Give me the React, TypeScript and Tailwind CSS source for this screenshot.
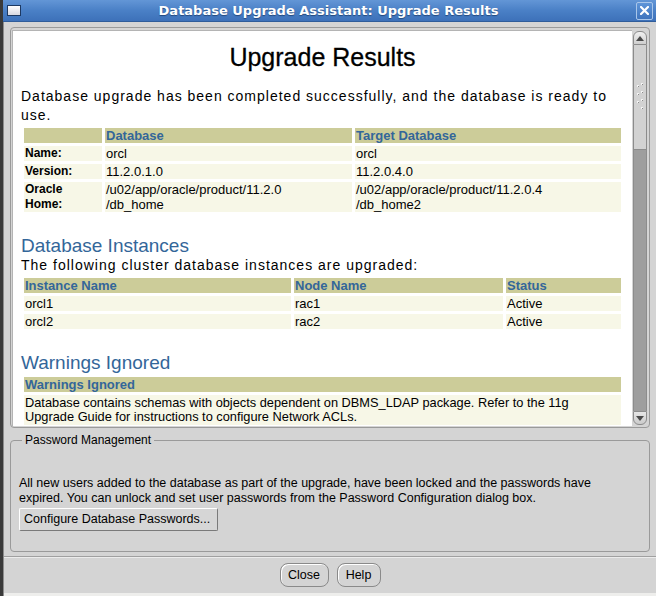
import React from "react";

const BLUE = "text-[#336699]";

function TitleBar() {
  return (
    <div className="h-[22px] flex items-center bg-gradient-to-b from-[#6396d6] via-[#4a80c6] to-[#3d71b9] border-b border-[#2f5c9a] pl-[4px] pr-[3px]">
      <div className="w-[14px] h-[11px] border border-[#1d3962] bg-gradient-to-b from-white to-[#d8d8e0]" />
      <div className="flex-1 text-center text-white font-bold text-[13px] font-['DejaVu_Sans',sans-serif] [text-shadow:0_1px_1px_#23487c]">
        Database Upgrade Assistant: Upgrade Results
      </div>
      <div className="w-[17px] h-[18px] rounded-[2px] border border-[#a9c6ea] bg-gradient-to-b from-[#5f95d8] to-[#3f74bd] flex items-center justify-center">
        <svg width="9" height="9" viewBox="0 0 9 9">
          <path d="M1 1 L8 8 M8 1 L1 8" stroke="white" strokeWidth="2.2" strokeLinecap="square" />
        </svg>
      </div>
    </div>
  );
}

function ScrollBar() {
  return (
    <div className="w-[14px] ml-[1px] mt-[1px] mb-[1px] flex flex-col">
      <div className="h-[14px] rounded-t-[6px] border border-[#8c8c8c] bg-gradient-to-b from-[#f0f0f0] to-[#cfcfcf] flex items-center justify-center">
        <svg width="8" height="5" viewBox="0 0 8 5">
          <path d="M0 5 L4 0 L8 5 Z" fill="#4a4a4a" />
        </svg>
      </div>
      <div className="h-[105px] border-x border-b border-[#8c8c8c] bg-[#d2d2d2] flex items-center justify-center">
        <svg width="8" height="28" viewBox="0 0 8 28">
          {[2, 10, 18].map((y) => (
            <rect key={"l" + y} x="1" y={y} width="2" height="2" fill="#f4f4f4" />
          ))}
          {[0, 8, 16, 24].map((y) => (
            <rect key={"r" + y} x="5" y={y} width="2" height="2" fill="#f4f4f4" />
          ))}
          {[3, 11, 19].map((y) => (
            <rect key={"ls" + y} x="2" y={y} width="1" height="1" fill="#8a8a8a" />
          ))}
          {[1, 9, 17, 25].map((y) => (
            <rect key={"rs" + y} x="6" y={y} width="1" height="1" fill="#8a8a8a" />
          ))}
        </svg>
      </div>
      <div className="flex-1 bg-[#9e9e9e] border-x border-[#8c8c8c]" />
      <div className="h-[14px] rounded-b-[6px] border border-[#8c8c8c] bg-gradient-to-b from-[#e6e6e6] to-[#cbcbcb] flex items-center justify-center">
        <svg width="8" height="5" viewBox="0 0 8 5">
          <path d="M0 0 L4 5 L8 0 Z" fill="#4a4a4a" />
        </svg>
      </div>
    </div>
  );
}

const th = "bg-[#cccc99] text-left font-bold text-[13px] leading-[15px] pl-[1px] text-[#336699]";
const td = "bg-[#f7f7e7] text-[13px] leading-[15px] pl-[1px] align-top";
const label = "bg-[#f7f7e7] text-[12px] leading-[15px] pl-[1px] font-bold align-top";

function Results() {
  return (
    <div className="px-[8px] font-['Liberation_Sans',Arial,sans-serif] text-black">
      <h1 className="mt-[11px] text-center text-[25px] leading-[30px] [-webkit-text-stroke:0.3px_black]">Upgrade Results</h1>
      <p className="mt-[15px] text-[14px] leading-[19px] tracking-[1px]">
        Database upgrade has been completed successfully, and the database is ready to
        <br />
        use.
      </p>

      <table className="w-full table-fixed border-separate border-spacing-[3px]">
        <thead>
          <tr>
            <th className={th + " w-[78px]"}></th>
            <th className={th + " w-[247px]"}>Database</th>
            <th className={th}>Target Database</th>
          </tr>
        </thead>
        <tbody>
          <tr>
            <td className={label}>Name:</td>
            <td className={td}>orcl</td>
            <td className={td}>orcl</td>
          </tr>
          <tr>
            <td className={label}>Version:</td>
            <td className={td}>11.2.0.1.0</td>
            <td className={td}>11.2.0.4.0</td>
          </tr>
          <tr>
            <td className={label}>
              Oracle
              <br />
              Home:
            </td>
            <td className={td}>
              /u02/app/oracle/product/11.2.0
              <br />
              /db_home
            </td>
            <td className={td}>
              /u02/app/oracle/product/11.2.0.4
              <br />
              /db_home2
            </td>
          </tr>
        </tbody>
      </table>

      <h2 className={"mt-[21px] text-[19px] leading-[20px] " + BLUE}>Database Instances</h2>
      <p className="text-[14px] leading-[18px] tracking-[1px]">
        The following cluster database instances are upgraded:
      </p>
      <table className="mt-[1px] w-full table-fixed border-separate border-spacing-[3px]">
        <thead>
          <tr>
            <th className={th + " w-[267px]"}>Instance Name</th>
            <th className={th + " w-[209px]"}>Node Name</th>
            <th className={th}>Status</th>
          </tr>
        </thead>
        <tbody>
          {[
            ["orcl1", "rac1"],
            ["orcl2", "rac2"],
          ].map(([inst, node]) => (
            <tr key={inst}>
              <td className={td}>{inst}</td>
              <td className={td}>{node}</td>
              <td className={td}>Active</td>
            </tr>
          ))}
        </tbody>
      </table>

      <h2 className={"mt-[21px] text-[19px] leading-[20px] " + BLUE}>Warnings Ignored</h2>
      <table className="mt-[1px] w-full border-separate border-spacing-[3px]">
        <thead>
          <tr>
            <th className={th}>Warnings Ignored</th>
          </tr>
        </thead>
        <tbody>
          <tr>
            <td className="bg-[#f7f7e7] text-[12.8px] leading-[14px] pl-[1px] pt-[1px] pb-[1px]">
              Database contains schemas with objects dependent on DBMS_LDAP package. Refer to the 11g
              <br />
              Upgrade Guide for instructions to configure Network ACLs.
            </td>
          </tr>
        </tbody>
      </table>
    </div>
  );
}

function DlgButton({ children, w }: { children: React.ReactNode; w: string }) {
  return (
    <button
      className={
        "h-[24px] rounded-[8px] border border-[#8a8a8a] bg-[#d4d4d4] shadow-[inset_1px_1px_0_#ffffff] text-[12.5px] text-black " +
        w
      }
    >
      {children}
    </button>
  );
}

export default function App() {
  return (
    <div className="w-[656px] h-[596px] overflow-hidden flex flex-col bg-[#d4d4d4] border-l-[3px] border-[#3a3a3a] font-['Liberation_Sans',Arial,sans-serif]">
      <TitleBar />
      <div className="flex-1 flex flex-col border-l border-[#8d8d8d]">
        <div className="mt-[5px] mx-[6px] h-[401px] rounded-[4px] border border-[#9a9a9a] pl-[1px] pr-[2px] pt-[2px] pb-[1px] flex">
          <div className="flex-1 bg-white border-l border-t border-[#b4b4b4] overflow-hidden">
            <Results />
          </div>
          <ScrollBar />
        </div>

        <fieldset className="mt-[5px] mx-[6px] h-[119px] rounded-[4px] border border-[#9a9a9a] px-[8px]">
          <legend className="ml-[3px] px-[3px] text-[12px] leading-[14px] text-black">Password Management</legend>
          <p className="pt-[29px] text-[12.5px] leading-[15px] text-black">
            All new users added to the database as part of the upgrade, have been locked and the passwords have
            <br />
            expired. You can unlock and set user passwords from the Password Configuration dialog box.
          </p>
          <button className="mt-[1px] w-[199px] h-[23px] rounded-[2px] border border-t-white border-l-white border-r-[#7a7a7a] border-b-[#7a7a7a] bg-[#d6d6d6] text-left pl-[4px] text-[12.5px] text-black">
            Configure Database Passwords...
          </button>
        </fieldset>

        <div className="mt-[4px] h-[2px] border-t border-[#a0a0a0] border-b border-b-[#ececec]" />

        <div className="mt-[5px] flex justify-center gap-[8px]">
          <DlgButton w="w-[49px]">Close</DlgButton>
          <DlgButton w="w-[44px]">Help</DlgButton>
        </div>
        <div className="flex-1" />
        <div className="h-[3px] bg-[#eeeeec]" />
      </div>
    </div>
  );
}
